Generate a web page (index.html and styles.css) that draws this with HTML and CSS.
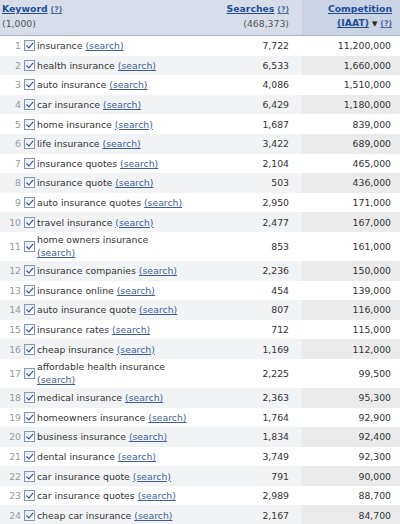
FILE: index.html
```html
<!DOCTYPE html>
<html>
<head>
<meta charset="utf-8">
<link rel="stylesheet" href="styles.css">
</head>
<body>
<table class="kt">
<colgroup><col class="c-num"><col class="c-cb"><col class="c-kw"><col class="c-sr"><col class="c-cp"></colgroup>
<thead>
<tr>
<th colspan="3" class="h-kw"><a class="hl">Keyword</a> <a class="q">(?)</a><br><span class="cnt">(1,000)</span></th>
<th class="h-sr"><a class="hl">Searches</a> <a class="q">(?)</a><br><span class="cnt">(468,373)</span></th>
<th class="h-cp"><a class="hl">Competition</a><br><a class="hl">(IAAT)</a> <span class="arr">&#9660;</span> <a class="q">(?)</a></th>
</tr>
</thead>
<tbody>
<tr><td class="n">1</td><td class="cb"><span class="box"></span></td><td class="kw">insurance <a class="s">(search)</a></td><td class="sr">7,722</td><td class="cp">11,200,000</td></tr>
<tr><td class="n">2</td><td class="cb"><span class="box"></span></td><td class="kw">health insurance <a class="s">(search)</a></td><td class="sr">6,533</td><td class="cp">1,660,000</td></tr>
<tr><td class="n">3</td><td class="cb"><span class="box"></span></td><td class="kw">auto insurance <a class="s">(search)</a></td><td class="sr">4,086</td><td class="cp">1,510,000</td></tr>
<tr><td class="n">4</td><td class="cb"><span class="box"></span></td><td class="kw">car insurance <a class="s">(search)</a></td><td class="sr">6,429</td><td class="cp">1,180,000</td></tr>
<tr><td class="n">5</td><td class="cb"><span class="box"></span></td><td class="kw">home insurance <a class="s">(search)</a></td><td class="sr">1,687</td><td class="cp">839,000</td></tr>
<tr><td class="n">6</td><td class="cb"><span class="box"></span></td><td class="kw">life insurance <a class="s">(search)</a></td><td class="sr">3,422</td><td class="cp">689,000</td></tr>
<tr><td class="n">7</td><td class="cb"><span class="box"></span></td><td class="kw">insurance quotes <a class="s">(search)</a></td><td class="sr">2,104</td><td class="cp">465,000</td></tr>
<tr><td class="n">8</td><td class="cb"><span class="box"></span></td><td class="kw">insurance quote <a class="s">(search)</a></td><td class="sr">503</td><td class="cp">436,000</td></tr>
<tr><td class="n">9</td><td class="cb"><span class="box"></span></td><td class="kw">auto insurance quotes <a class="s">(search)</a></td><td class="sr">2,950</td><td class="cp">171,000</td></tr>
<tr><td class="n">10</td><td class="cb"><span class="box"></span></td><td class="kw">travel insurance <a class="s">(search)</a></td><td class="sr">2,477</td><td class="cp">167,000</td></tr>
<tr class="tall"><td class="n">11</td><td class="cb"><span class="box"></span></td><td class="kw">home owners insurance<br><a class="s">(search)</a></td><td class="sr">853</td><td class="cp">161,000</td></tr>
<tr><td class="n">12</td><td class="cb"><span class="box"></span></td><td class="kw">insurance companies <a class="s">(search)</a></td><td class="sr">2,236</td><td class="cp">150,000</td></tr>
<tr><td class="n">13</td><td class="cb"><span class="box"></span></td><td class="kw">insurance online <a class="s">(search)</a></td><td class="sr">454</td><td class="cp">139,000</td></tr>
<tr><td class="n">14</td><td class="cb"><span class="box"></span></td><td class="kw">auto insurance quote <a class="s">(search)</a></td><td class="sr">807</td><td class="cp">116,000</td></tr>
<tr><td class="n">15</td><td class="cb"><span class="box"></span></td><td class="kw">insurance rates <a class="s">(search)</a></td><td class="sr">712</td><td class="cp">115,000</td></tr>
<tr><td class="n">16</td><td class="cb"><span class="box"></span></td><td class="kw">cheap insurance <a class="s">(search)</a></td><td class="sr">1,169</td><td class="cp">112,000</td></tr>
<tr class="tall"><td class="n">17</td><td class="cb"><span class="box"></span></td><td class="kw">affordable health insurance<br><a class="s">(search)</a></td><td class="sr">2,225</td><td class="cp">99,500</td></tr>
<tr><td class="n">18</td><td class="cb"><span class="box"></span></td><td class="kw">medical insurance <a class="s">(search)</a></td><td class="sr">2,363</td><td class="cp">95,300</td></tr>
<tr><td class="n">19</td><td class="cb"><span class="box"></span></td><td class="kw">homeowners insurance <a class="s">(search)</a></td><td class="sr">1,764</td><td class="cp">92,900</td></tr>
<tr><td class="n">20</td><td class="cb"><span class="box"></span></td><td class="kw">business insurance <a class="s">(search)</a></td><td class="sr">1,834</td><td class="cp">92,400</td></tr>
<tr><td class="n">21</td><td class="cb"><span class="box"></span></td><td class="kw">dental insurance <a class="s">(search)</a></td><td class="sr">3,749</td><td class="cp">92,300</td></tr>
<tr><td class="n">22</td><td class="cb"><span class="box"></span></td><td class="kw">car insurance quote <a class="s">(search)</a></td><td class="sr">791</td><td class="cp">90,000</td></tr>
<tr><td class="n">23</td><td class="cb"><span class="box"></span></td><td class="kw">car insurance quotes <a class="s">(search)</a></td><td class="sr">2,989</td><td class="cp">88,700</td></tr>
<tr><td class="n">24</td><td class="cb"><span class="box"></span></td><td class="kw">cheap car insurance <a class="s">(search)</a></td><td class="sr">2,167</td><td class="cp">84,700</td></tr>
</tbody>
</table>
</body>
</html>
```
FILE: styles.css
```css
html, body {
  margin: 0;
  padding: 0;
  background: #ffffff;
}
.kt {
  width: 400px;
  border-collapse: collapse;
  table-layout: fixed;
  font-family: "DejaVu Sans", Verdana, sans-serif;
  font-size: 9.3px;
  color: #333333;
}
.c-num { width: 23px; }
.c-cb { width: 14px; }
.c-kw { width: 165px; }
.c-sr { width: 100px; }
.c-cp { width: 98px; }

.kt th {
  background: #d7dee9;
  font-weight: normal;
  vertical-align: top;
  line-height: 14px;
  height: 30px;
  padding: 2px 0 3px 0;
  border-bottom: 1px solid #a9b3c2;
}
.kt th.h-kw { text-align: left; padding-left: 2px; }
.kt th.h-sr { text-align: right; padding-right: 13px; }
.kt th.h-cp { text-align: right; padding-right: 8px; background: #c9d3e3; }
.hl {
  color: #1f4e96;
  font-weight: bold;
  text-decoration: underline;
}
.q {
  color: #4a6a9e;
  font-size: 7.8px;
  font-weight: bold;
  text-decoration: underline;
}
.cnt { color: #555555; }
.arr { font-size: 7px; color: #222; }

.kt td {
  line-height: 13px;
  padding-top: 3.3px;
  padding-bottom: 3.3px;
  vertical-align: middle;
}
.kt tr.tall td { padding-top: 1.5px; padding-bottom: 1.5px; }
.kt tbody tr:nth-child(even) td { background: #f2f3f5; }
.kt tbody tr:nth-child(even) td.cp { background: #ebebeb; }
.kt td.n { text-align: right; color: #9a9a9a; padding-right: 2px; }
.kt td.cb { padding-left: 1px; }
.kt td.kw { padding-left: 0; white-space: nowrap; }
.kt td.sr { text-align: right; padding-right: 13px; }
.kt td.cp { text-align: right; padding-right: 9px; }
.s { color: #3f5f9c; text-decoration: underline; }
.box {
  display: block;
  width: 9px;
  height: 9px;
  border: 1px solid #8498b6;
  background: linear-gradient(135deg, #e6eaf0, #ffffff);
  position: relative;
}
.box::after {
  content: "";
  position: absolute;
  left: 2.5px;
  top: 0px;
  width: 2.5px;
  height: 5.5px;
  border-right: 1.6px solid #1f3fa0;
  border-bottom: 1.6px solid #1f3fa0;
  transform: rotate(40deg);
}
```
